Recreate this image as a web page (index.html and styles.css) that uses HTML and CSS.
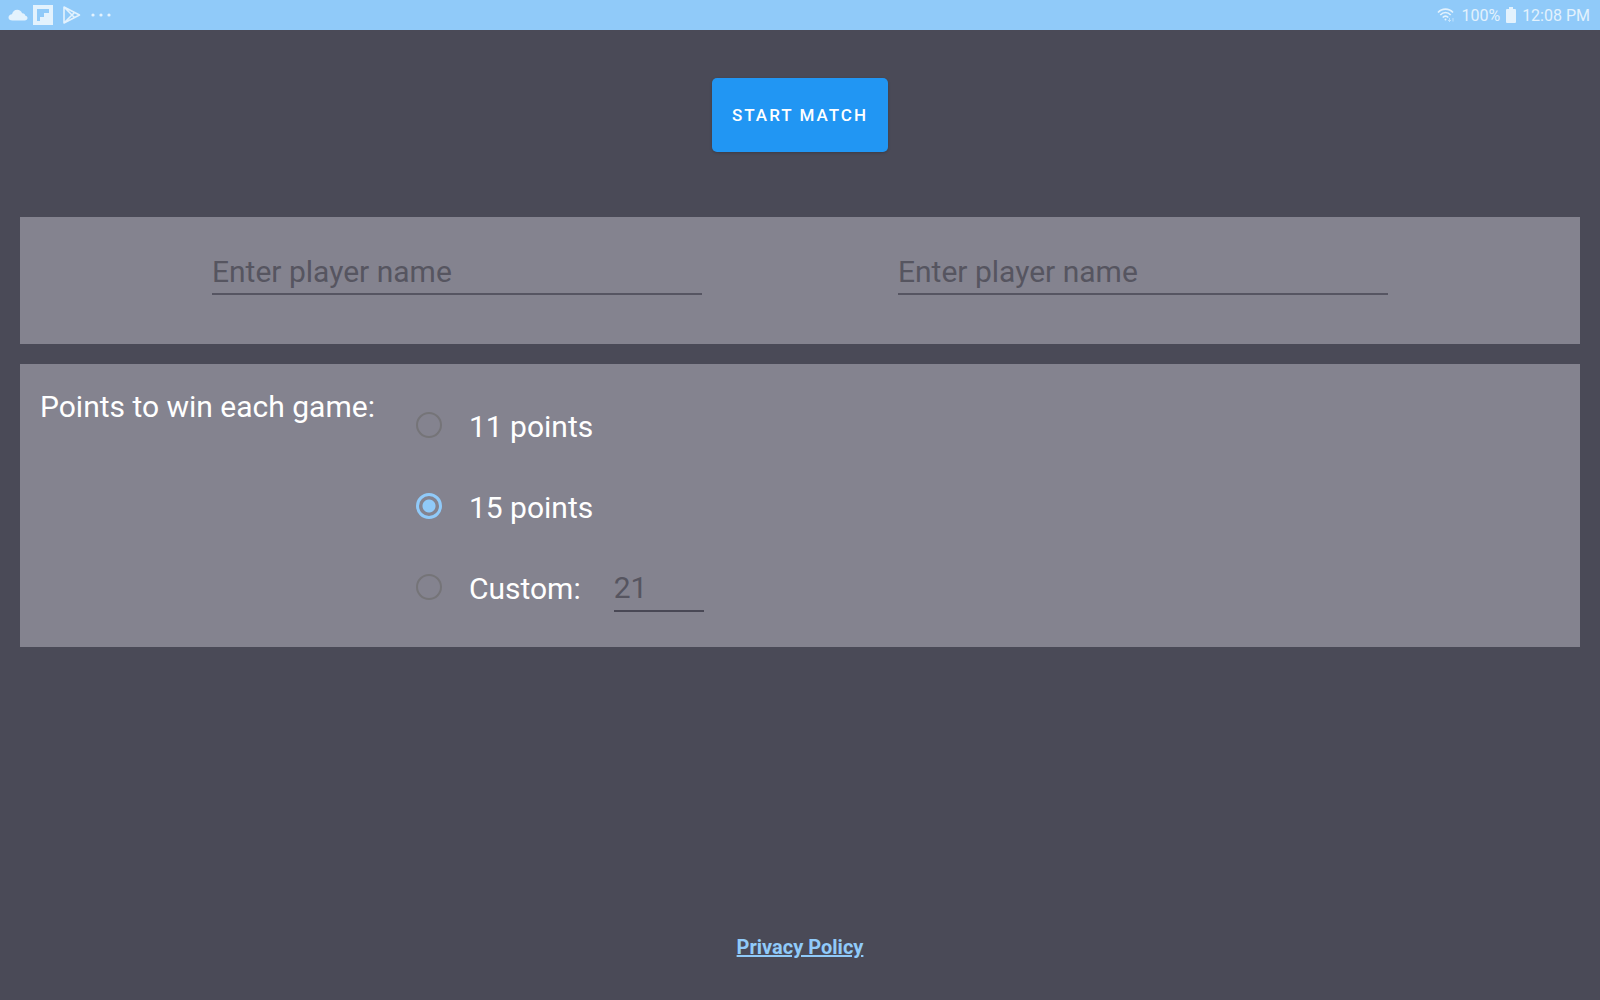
FILE: index.html
```html
<!DOCTYPE html>
<html lang="en">
<head>
  <meta charset="UTF-8">
  <meta name="viewport" content="width=device-width, initial-scale=1">
  <title>Start Match</title>
  <link rel="stylesheet" href="styles.css">
</head>
<body>
  <header class="status-bar">
    <div class="status-left">
      <svg width="20" height="12" viewBox="0 0 20 12" fill="currentColor"><path d="M4.500 11.500C2 11.500.500 10.300.500 8.500S2 5.400 4 5.300C4.500 2.500 6.600.700 9.200.700c2.300 0 4.200 1.400 4.900 3.600 1.700-.2 3 .8 3.300 2.400 1.300.2 2.100 1.100 2.100 2.300 0 1.500-1.200 2.500-2.800 2.500z"/></svg>
      <svg width="20" height="20" viewBox="0 0 20 20" fill="currentColor" fill-rule="evenodd"><path d="M0 0h20v20H0zM4 4v12h3v-4h4V8h5V4z"/></svg>
      <svg width="18" height="20" viewBox="0 0 18 20" fill="none" stroke="currentColor" stroke-width="1.600" stroke-linejoin="round"><path d="M1 2v16L16.500 10zM1 2l10.500 10.500M1 18L11.500 7.500"/></svg>
      <svg width="20" height="4" viewBox="0 0 20 4" fill="currentColor"><circle cx="2" cy="2" r="1.600"/><circle cx="10" cy="2" r="1.600"/><circle cx="18" cy="2" r="1.600"/></svg>
    </div>
    <div class="status-right">
      <svg width="18" height="16" viewBox="0 0 18 16" fill="none" stroke="currentColor" stroke-width="1.600"><path d="M1 5.500c4-4.500 11-4.500 15 0M3.300 8c3-3.300 7.400-3.300 10.400 0M5.700 10.500c1.700-1.800 3.900-1.800 5.600 0"/><circle cx="8.500" cy="12.500" r="1" fill="currentColor" stroke="none"/><path d="M12.500 11v3.500M11 13l1.500 1.500L14 13M16 14.500V11" stroke-width="1" opacity=".6"/></svg>
      <span>100%</span>
      <svg width="10" height="16" viewBox="0 0 10 16" fill="currentColor"><path d="M3 0h4v2h2q1 0 1 1v12q0 1-1 1H1q-1 0-1-1V3q0-1 1-1h2z"/></svg>
      <span>12:08 PM</span>
    </div>
  </header>

  <main class="content">
    <button type="button" class="btn-start">START MATCH</button>

    <section class="panel players">
      <input type="text" class="field name-field" placeholder="Enter player name" aria-label="Player 1 name">
      <input type="text" class="field name-field" placeholder="Enter player name" aria-label="Player 2 name">
    </section>

    <section class="panel points" role="radiogroup" aria-labelledby="points-title">
      <div class="points-title" id="points-title">Points to win each game:</div>
      <div class="options">
        <div class="option">
          <input type="radio" name="points" id="points-11" value="11">
          <label for="points-11">11 points</label>
        </div>
        <div class="option">
          <input type="radio" name="points" id="points-15" value="15" checked>
          <label for="points-15">15 points</label>
        </div>
        <div class="option">
          <input type="radio" name="points" id="points-custom" value="custom">
          <label for="points-custom">Custom:</label>
          <input type="text" inputmode="numeric" class="field custom-field" placeholder="21" aria-label="Custom points">
        </div>
      </div>
    </section>
  </main>

  <footer class="footer">
    <a href="#">Privacy Policy</a>
  </footer>
</body>
</html>
```
FILE: styles.css
```css
* {
  box-sizing: border-box;
}

body {
  font-family: Roboto, sans-serif;
  background-color: #4a4a57;
  color: #fff;
  margin: 0;
  min-height: 100vh;
  display: flex;
  flex-direction: column;
}

.status-bar {
  display: flex;
  justify-content: space-between;
  align-items: center;
  height: 30px;
  padding: 0 10px 0 8px;
  background-color: #90caf9;
  color: #e3f2fd;
  font-size: 16px;
}

.status-left,
.status-right {
  display: flex;
  align-items: center;
}

.status-left {
  gap: 10px;
}

.status-left svg:first-child {
  margin-right: -5px;
}

.status-right {
  gap: 6px;
}

.content {
  flex: 1;
  display: flex;
  flex-direction: column;
  padding: 48px 20px 0;
}

.btn-start {
  align-self: center;
  height: 74px;
  padding: 0 20px;
  margin-bottom: 65px;
  border: none;
  border-radius: 5px;
  background-color: #2196f3;
  box-shadow: 0 1px 3px rgba(0, 0, 0, 0.2);
  color: #fff;
  font-family: inherit;
  font-size: 17px;
  font-weight: 500;
  letter-spacing: 2px;
  cursor: pointer;
}

.panel {
  background-color: #84838f;
  margin-bottom: 20px;
}

.players {
  display: flex;
  justify-content: space-evenly;
  padding: 28px 0 49px;
}

.field {
  height: 50px;
  padding: 4px 0 0;
  border: none;
  border-bottom: 2px solid #565562;
  border-radius: 0;
  background: none;
  color: #fff;
  font-family: inherit;
  font-size: 30px;
  outline: none;
}

.field::placeholder {
  color: #565560;
  opacity: 1;
}

.name-field {
  width: 490px;
  margin: 0 4px;
}

.points {
  display: flex;
  gap: 41px;
  padding: 20px;
  font-size: 30px;
}

.points-title {
  line-height: 46px;
}

.option {
  display: flex;
  align-items: center;
  height: 81px;
}

.option label {
  padding-top: 4px;
}

.option input[type="radio"] {
  appearance: none;
  width: 26px;
  height: 26px;
  margin: 0 27px 0 0;
  border: 2px solid #757478;
  border-radius: 50%;
}

.option input[type="radio"]:checked {
  border-width: 3px;
  border-color: #90caf9;
  background: radial-gradient(circle, #90caf9 6px, transparent 7px);
}

.option .custom-field {
  width: 90px;
  margin-left: 33px;
  border-color: #494855;
}

.footer {
  padding-bottom: 41px;
  text-align: center;
}

.footer a {
  color: #90caf9;
  font-size: 20px;
  font-weight: 700;
  line-height: 24px;
}
```
